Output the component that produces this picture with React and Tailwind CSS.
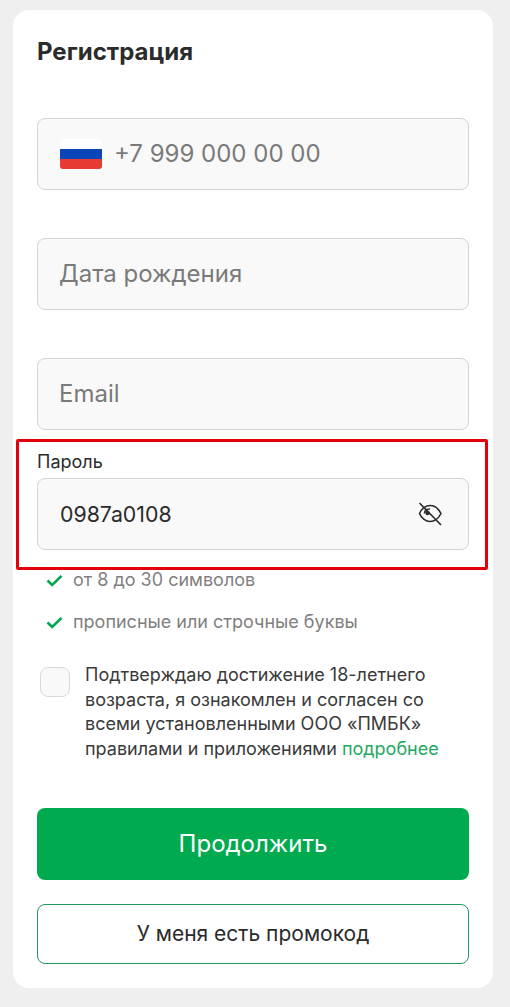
const fieldClass =
  "flex h-[72px] items-center rounded-lg border border-[#d4d4d4] bg-[#f9f9f9] px-[21px] text-[24px] text-[#7a7a7a]";

function Check() {
  return (
    <svg width="17" height="13" viewBox="0 0 17 13" fill="none" className="shrink-0">
      <path d="M1.5 6.5L6.2 11L15.5 1.8" stroke="#00a84f" strokeWidth="2.6" />
    </svg>
  );
}

function EyeOff() {
  return (
    <svg width="24" height="24" viewBox="0 0 24 24" fill="none" stroke="#2b2b2b" strokeWidth="1.6" className="mr-[5px]">
      <path d="M1.5 11.5C3.5 6.5 8 3.5 12 3.5C16.5 3.5 20.5 6.5 23 11.5C20.5 16.5 16.5 19.5 12 19.5C8 19.5 3.5 16.5 1.5 11.5Z" />
      <path d="M6.5 11.5C6.5 8.5 9 7 12 7" />
      <circle cx="9.5" cy="11" r="2.2" fill="#2b2b2b" stroke="none" />
      <path d="M1.5 1L23 23" />
    </svg>
  );
}

function Flag() {
  return (
    <div className="mr-3 ml-px flex h-[30px] w-[42px] flex-col overflow-hidden rounded-[3px]">
      <div className="flex-1 bg-white" />
      <div className="flex-1 bg-[#0b45b8]" />
      <div className="flex-1 bg-[#e63a33]" />
    </div>
  );
}

export default function App() {
  return (
    <div className="min-h-[1007px] bg-[#efefef] px-[13px] pt-[10px] font-['Inter',sans-serif]">
      <div className="relative h-[978px] w-[480px] rounded-2xl bg-white px-6">
        {/* Title */}
        <h1 className="pt-[26px] text-[24px] leading-8 font-bold text-[#2b2b2b]">Регистрация</h1>

        <div className={`mt-[50px] ${fieldClass}`}>
          <Flag />
          +7 999 000 00 00
        </div>
        <div className={`mt-12 ${fieldClass}`}>Дата рождения</div>
        <div className={`mt-12 ${fieldClass}`}>Email</div>

        {/* Password */}
        <div className="mt-[22px] text-[18px] leading-5 text-[#2b2b2b]">Пароль</div>
        <div className={`mt-[6px] justify-between !text-[21.3px] !text-[#2b2b2b] ${fieldClass}`}>
          <span className="mt-[2px] ml-px">0987a0108</span>
          <EyeOff />
        </div>

        <div className="mt-[18px] flex items-center gap-[10px] pl-[9px] text-[18px] leading-6 text-[#7f7f7f]">
          <Check />
          от 8 до 30 символов
        </div>
        <div className="mt-[18px] flex items-center gap-[10px] pl-[9px] text-[18px] leading-6 text-[#7f7f7f]">
          <Check />
          прописные или строчные буквы
        </div>

        {/* Agreement */}
        <div className="mt-[31px] flex gap-[15px] pl-[3px]">
          <div className="mt-[2px] h-[30px] w-[30px] shrink-0 rounded-lg border border-[#d9d9d9] bg-[#f9f9f9]" />
          <p className="-mt-[2px] text-[18px] leading-[24.5px] text-[#3a3a3a]">
            Подтверждаю достижение 18-летнего возраста, я ознакомлен и согласен со всеми установленными ООО «ПМБК»
            правилами и приложениями <span className="text-[#1fa85f]">подробнее</span>
          </p>
        </div>

        {/* Buttons */}
        <button className="mt-[47px] flex h-[72px] w-full items-center justify-center rounded-lg bg-[#00aa4f] text-[24px] text-white">
          Продолжить
        </button>
        <button className="mt-6 flex h-[60px] w-full items-center justify-center rounded-lg border border-[#1f9a5c] bg-white text-[21px] text-[#2b2b2b]">
          У меня есть промокод
        </button>

        {/* Red highlight over the password field */}
        <div className="pointer-events-none absolute top-[429px] left-[3px] h-[131px] w-[472px] rounded-[2px] border-[3px] border-[#e3000b]" />
      </div>
    </div>
  );
}
